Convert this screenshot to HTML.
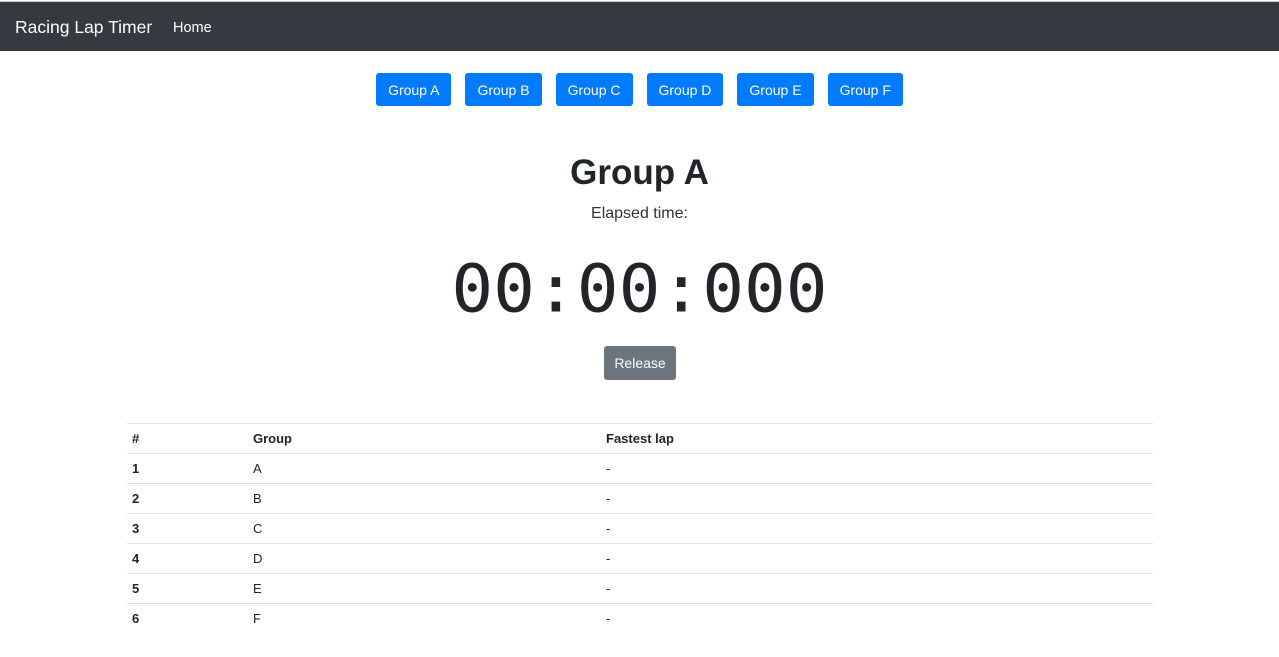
<!DOCTYPE html>
<html><head><style>
body{margin:0;font-family:"Liberation Sans",sans-serif;color:#212529;background:#fff;width:1279px;height:657px;overflow:hidden}
.nav{position:absolute;top:1px;left:0;width:1279px;height:50px;background:#343a40;border-top:1px solid #ccc;box-sizing:border-box}
.brand{position:absolute;left:15px;top:15px;color:#fff;font-size:17.5px}
.home{position:absolute;left:173px;top:18px;color:#fff;font-size:14.5px}
.btns{position:absolute;top:73px;left:0;width:1279px;text-align:center;font-size:0}
.btn{display:inline-block;background:#007bff;color:#fff;font-size:14px;height:33px;line-height:35px;border-radius:3px;margin:0 7px;padding:0 12px}
h1{position:absolute;top:153px;left:0;width:1279px;text-align:center;margin:0;font-size:35px;font-weight:bold}
.el{position:absolute;top:205px;width:1279px;text-align:center;font-size:16px;color:#333}
.timer{position:absolute;top:250px;left:0;width:1279px;text-align:center;font-family:"DejaVu Sans Mono",monospace;font-size:62px;color:#212529;transform:scale(1.12,1.06);transform-origin:50% 0}
.rel{position:absolute;left:604px;top:346px;width:72px;height:34px;line-height:35px;background:#6c757d;color:#fff;border-radius:3px;text-align:center;font-size:14px}
table{position:absolute;top:423px;left:127px;width:1026px;border-collapse:collapse;font-size:13px}
td,th{border-top:1px solid #dee2e6;height:29px;padding:0 5px;text-align:left}
th{font-weight:bold}
</style></head><body>
<div class="nav"><span class="brand">Racing Lap Timer</span><span class="home">Home</span></div>
<div class="btns"><span class="btn">Group A</span><span class="btn">Group B</span><span class="btn">Group C</span><span class="btn">Group D</span><span class="btn">Group E</span><span class="btn">Group F</span></div>
<h1>Group A</h1>
<div class="el">Elapsed time:</div>
<div class="timer">00:00:000</div>
<div class="rel">Release</div>
<table>
<tr><th style="width:111px">#</th><th style="width:343px">Group</th><th>Fastest lap</th></tr>
<tr><th>1</th><td>A</td><td>-</td></tr>
<tr><th>2</th><td>B</td><td>-</td></tr>
<tr><th>3</th><td>C</td><td>-</td></tr>
<tr><th>4</th><td>D</td><td>-</td></tr>
<tr><th>5</th><td>E</td><td>-</td></tr>
<tr><th>6</th><td>F</td><td>-</td></tr>
</table>
</body></html>
